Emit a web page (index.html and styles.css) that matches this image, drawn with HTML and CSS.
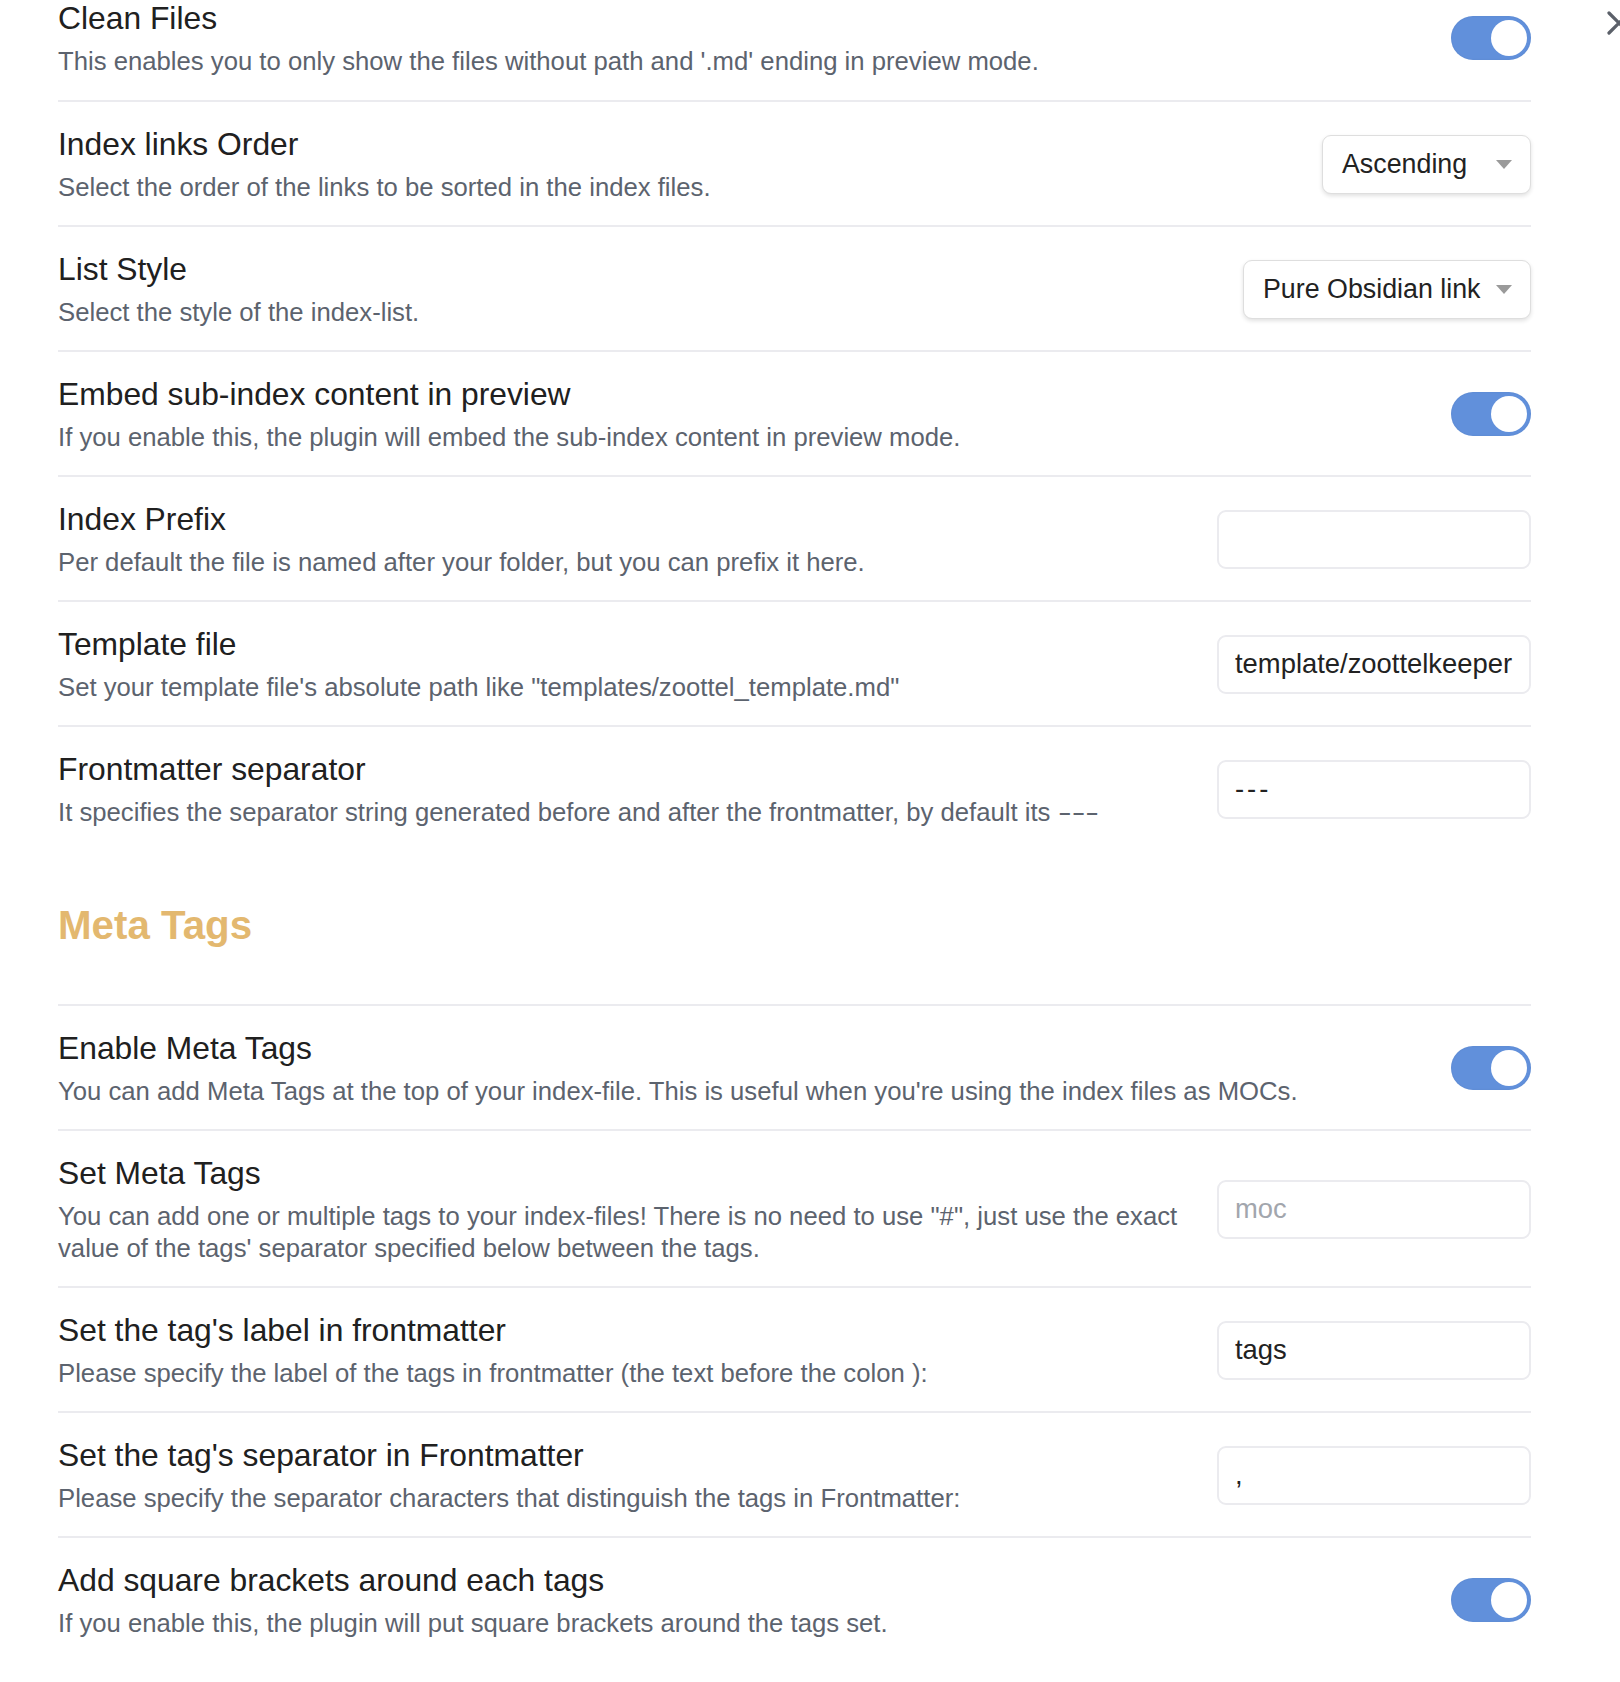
FILE: index.html
```html
<!DOCTYPE html>
<html lang="en">
<head>
<meta charset="utf-8">
<title>Settings</title>
<link rel="stylesheet" href="styles.css">
</head>
<body>
<div class="page">
  <div class="close-x" aria-label="Close">
    <svg width="26" height="26" viewBox="0 0 26 26"><path d="M3 3 L23 23 M23 3 L3 23" stroke="#5b6069" stroke-width="3.2" stroke-linecap="round" fill="none"/></svg>
  </div>
  <div class="settings">
    <div class="item first">
      <div class="info">
        <div class="name">Clean Files</div>
        <div class="desc">This enables you to only show the files without path and '.md' ending in preview mode.</div>
      </div>
      <div class="control"><div class="toggle"><span class="knob"></span></div></div>
    </div>
    <div class="item">
      <div class="info">
        <div class="name">Index links Order</div>
        <div class="desc">Select the order of the links to be sorted in the index files.</div>
      </div>
      <div class="control">
        <div class="dropdown dd-order"><span class="dd-text">Ascending</span><svg class="dd-arrow" width="16" height="9" viewBox="0 0 16 9"><path d="M0 0 H16 L8 9 Z" fill="#9a9a9a"/></svg></div>
      </div>
    </div>
    <div class="item">
      <div class="info">
        <div class="name">List Style</div>
        <div class="desc">Select the style of the index-list.</div>
      </div>
      <div class="control">
        <div class="dropdown dd-style"><span class="dd-text">Pure Obsidian link</span><svg class="dd-arrow" width="16" height="9" viewBox="0 0 16 9"><path d="M0 0 H16 L8 9 Z" fill="#9a9a9a"/></svg></div>
      </div>
    </div>
    <div class="item">
      <div class="info">
        <div class="name">Embed sub-index content in preview</div>
        <div class="desc">If you enable this, the plugin will embed the sub-index content in preview mode.</div>
      </div>
      <div class="control"><div class="toggle"><span class="knob"></span></div></div>
    </div>
    <div class="item">
      <div class="info">
        <div class="name">Index Prefix</div>
        <div class="desc">Per default the file is named after your folder, but you can prefix it here.</div>
      </div>
      <div class="control"><input class="text-input" type="text" value=""></div>
    </div>
    <div class="item">
      <div class="info">
        <div class="name">Template file</div>
        <div class="desc">Set your template file's absolute path like "templates/zoottel_template.md"</div>
      </div>
      <div class="control"><input class="text-input" type="text" value="template/zoottelkeeper"></div>
    </div>
    <div class="item">
      <div class="info">
        <div class="name">Frontmatter separator</div>
        <div class="desc">It specifies the separator string generated before and after the frontmatter, by default its <span class="dashes">---</span></div>
      </div>
      <div class="control"><input class="text-input dash-input" type="text" value="---"></div>
    </div>

    <h3 class="heading">Meta Tags</h3>

    <div class="item">
      <div class="info">
        <div class="name">Enable Meta Tags</div>
        <div class="desc">You can add Meta Tags at the top of your index-file. This is useful when you're using the index files as MOCs.</div>
      </div>
      <div class="control"><div class="toggle"><span class="knob"></span></div></div>
    </div>
    <div class="item">
      <div class="info">
        <div class="name">Set Meta Tags</div>
        <div class="desc">You can add one or multiple tags to your index-files! There is no need to use "#", just use the exact value of the tags' separator specified below between the tags.</div>
      </div>
      <div class="control"><input class="text-input" type="text" value="" placeholder="moc"></div>
    </div>
    <div class="item">
      <div class="info">
        <div class="name">Set the tag's label in frontmatter</div>
        <div class="desc">Please specify the label of the tags in frontmatter (the text before the colon ):</div>
      </div>
      <div class="control"><input class="text-input" type="text" value="tags"></div>
    </div>
    <div class="item">
      <div class="info">
        <div class="name">Set the tag's separator in Frontmatter</div>
        <div class="desc">Please specify the separator characters that distinguish the tags in Frontmatter:</div>
      </div>
      <div class="control"><input class="text-input" type="text" value=","></div>
    </div>
    <div class="item">
      <div class="info">
        <div class="name">Add square brackets around each tags</div>
        <div class="desc">If you enable this, the plugin will put square brackets around the tags set.</div>
      </div>
      <div class="control"><div class="toggle"><span class="knob"></span></div></div>
    </div>
  </div>
</div>
</body>
</html>
```

FILE: styles.css
```css
* { box-sizing: border-box; }

html, body {
  margin: 0;
  padding: 0;
  background: #ffffff;
}

body {
  font-family: "Liberation Sans", Arial, "Noto Sans CJK SC", sans-serif;
  color: #222222;
  overflow: hidden;
}

.page {
  position: relative;
  width: 1620px;
  height: 1682px;
  overflow: hidden;
}

.close-x {
  position: absolute;
  left: 1606px;
  top: 10px;
  width: 26px;
  height: 26px;
}

.close-x svg { display: block; }

.settings {
  margin-left: 58px;
  width: 1473px;
}

.item {
  display: flex;
  align-items: center;
  border-top: 2px solid #ebebef;
  padding: 23px 0 22px 0;
}

.item.first {
  border-top: none;
  margin-top: -1px;
  padding-top: 0;
  padding-bottom: 23px;
}

.info {
  flex: 1 1 auto;
  min-width: 0;
  margin-right: 24px;
}

.name {
  font-size: 31.8px;
  line-height: 38px;
  color: #202020;
  margin-bottom: 8px;
}

.desc {
  font-size: 25.7px;
  line-height: 32px;
  color: #5c636e;
}

.dashes {
  display: inline-block;
  transform: scaleX(1.6);
  transform-origin: left center;
}

.control {
  flex: 0 0 auto;
  display: flex;
  justify-content: flex-end;
  align-items: center;
}

.toggle {
  position: relative;
  width: 80px;
  height: 44px;
  border-radius: 22px;
  background: #6190db;
  box-shadow: inset 0 0 2px rgba(0, 0, 0, 0.08);
}

.knob {
  position: absolute;
  top: 4px;
  right: 4px;
  width: 36px;
  height: 36px;
  border-radius: 50%;
  background: #ffffff;
}

.dropdown {
  height: 59px;
  display: flex;
  align-items: center;
  justify-content: space-between;
  padding: 0 18px 0 19px;
  border: 1px solid #dedede;
  border-radius: 9px;
  background: #ffffff;
  box-shadow: 0 2px 4px rgba(0, 0, 0, 0.12);
  font-size: 26.8px;
  color: #222222;
}

.dd-order { width: 209px; }
.dd-style { width: 288px; }

.dd-arrow { display: block; flex: 0 0 auto; }

.text-input {
  width: 314px;
  height: 59px;
  padding: 0 12px 0 16px;
  border: 2px solid #ebebef;
  border-radius: 9px;
  background: #ffffff;
  font-family: "Liberation Sans", Arial, sans-serif;
  font-size: 27.4px;
  color: #222222;
  outline: none;
}

.dash-input {
  letter-spacing: 3px;
}

.text-input::placeholder {
  color: #a2a6ad;
}

.heading {
  margin: 52px 0 54px 0;
  font-size: 40.3px;
  line-height: 48px;
  font-weight: 700;
  color: #e3b86f;
}
```
